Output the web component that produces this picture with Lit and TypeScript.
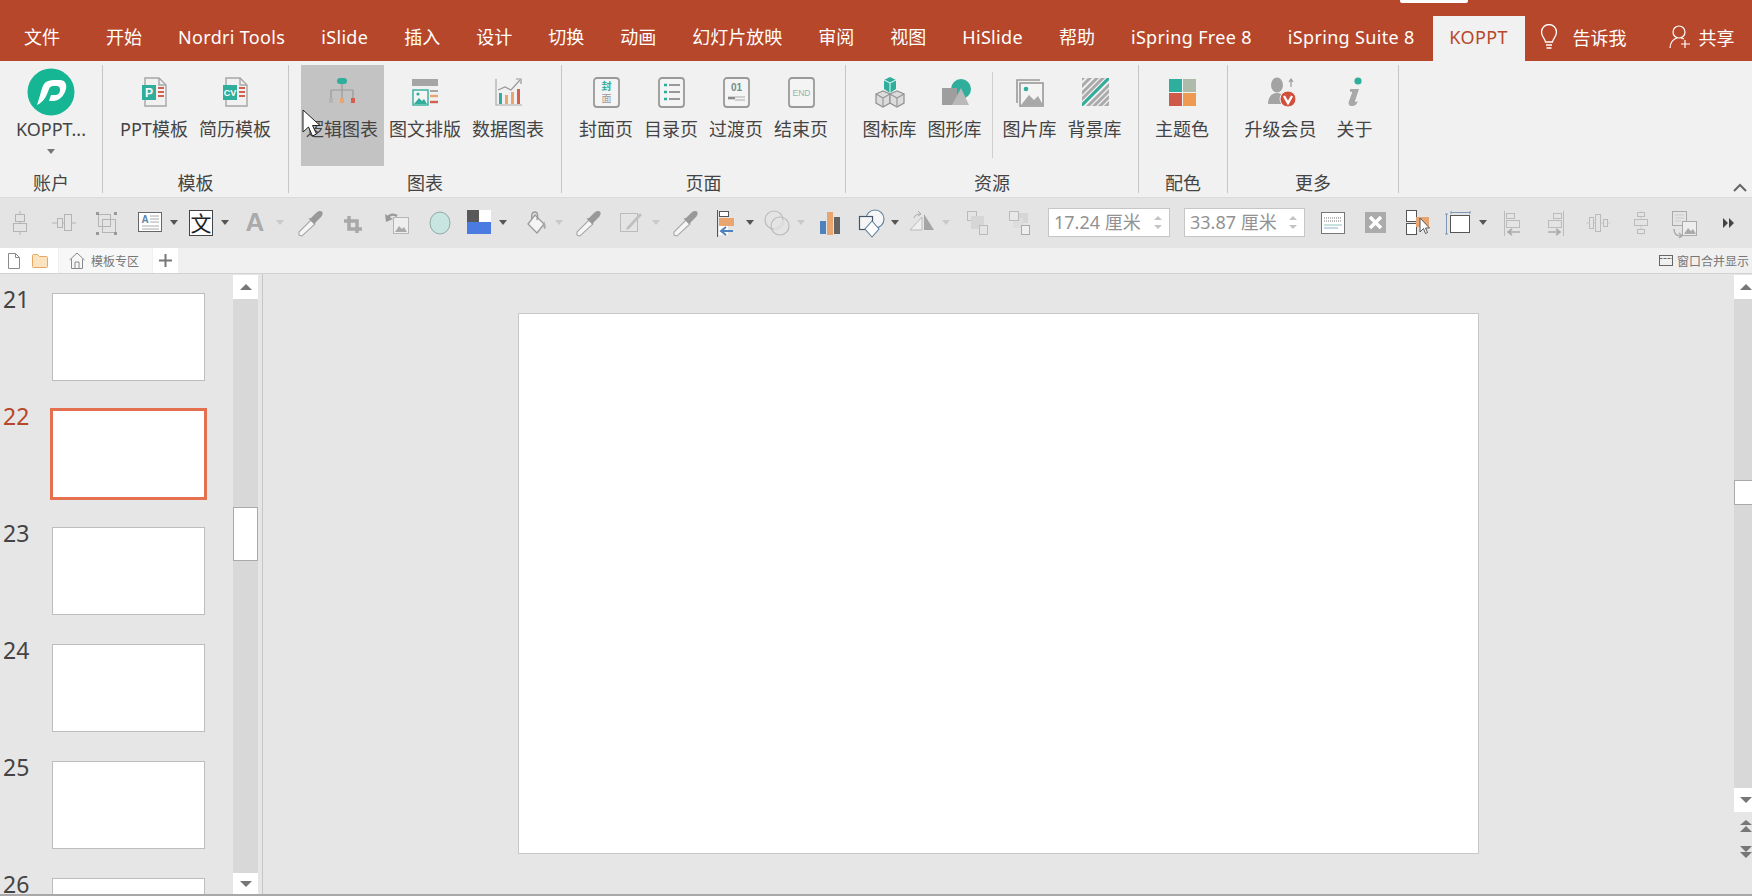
import { LitElement, html, css, svg } from "lit";
import { customElement } from "lit/decorators.js";
import { classMap } from "lit/directives/class-map.js";
import { styleMap } from "lit/directives/style-map.js";

const TEAL = "#2FAE9B";
const ORANGE = "#E9A56F";
const RED = "#D4604C";
const GRAY = "#A6A6A6";

// ribbon icons, drawn on a 32x32 box
const doc = (inner: unknown) => svg`
  <path d="M7 2h14l7 7v21H7z" fill="#f1f1f1" stroke="${GRAY}" stroke-width="1.4"/>
  <path d="M21 2v7h7" fill="none" stroke="${GRAY}" stroke-width="1.4"/>
  <rect x="4" y="9" width="14" height="15" fill="${TEAL}"/>
  <path d="M20 12h6M20 16h6M20 20h6" stroke="${RED}" stroke-width="2"/>
  ${inner}`;

const framed = (inner: unknown) => svg`
  <rect x="4" y="2" width="25" height="29" rx="3" fill="#f4f4f4" stroke="#9a9a9a" stroke-width="1.8"/>
  ${inner}`;

const cube = (x: number, y: number) => svg`
  <path d="M${x} ${y + 3}l7-3 7 3v9l-7 4-7-4z" fill="#dcdcdc" stroke="#959595" stroke-width="1.300"/>
  <path d="M${x} ${y + 3}l7 4 7-4M${x + 7} ${y + 7}v9" fill="none" stroke="#959595" stroke-width="1.100"/>`;

const RIBBON_ICONS: Record<string, unknown> = {
  ppt: doc(svg`<text x="11" y="21" text-anchor="middle" font-size="12" font-weight="700" fill="#fff" font-family="Liberation Sans">P</text>`),
  cv: doc(svg`<text x="11" y="20" text-anchor="middle" font-size="9" font-weight="700" fill="#fff" font-family="Liberation Sans">CV</text>`),
  logic: svg`
    <rect x="11" y="2" width="10" height="6" rx="3" fill="${TEAL}"/>
    <path d="M16 8v14M5 14h22M5 14v8M27 14v8" stroke="#999" stroke-width="1.2" fill="none"/>
    <rect x="3" y="22" width="4" height="5" fill="#b5b5b5"/>
    <rect x="14" y="22" width="4" height="5" fill="${ORANGE}"/>
    <rect x="25" y="22" width="4" height="5" fill="${RED}"/>`,
  layout: svg`
    <rect x="3" y="3" width="26" height="7" fill="#a5a5a5"/>
    <rect x="4" y="14" width="15" height="15" fill="#f4f4f4" stroke="${TEAL}" stroke-width="1.4"/>
    <path d="M5 28l5-6 3 3 2-2 3 5z" fill="${TEAL}"/>
    <circle cx="9" cy="18" r="1.6" fill="${TEAL}"/>
    <path d="M21 15h8" stroke="#a5a5a5" stroke-width="2"/>
    <path d="M21 20h8" stroke="${ORANGE}" stroke-width="2.4"/>
    <path d="M21 26h8" stroke="${RED}" stroke-width="2.4"/>`,
  chart: svg`
    <path d="M4 3v26h26" fill="none" stroke="#aaa" stroke-width="1.2"/>
    <rect x="7" y="17" width="3" height="11" fill="${TEAL}"/>
    <rect x="13" y="19" width="3" height="9" fill="${ORANGE}"/>
    <rect x="19" y="16" width="3" height="12" fill="${ORANGE}"/>
    <rect x="25" y="13" width="3" height="15" fill="${RED}"/>
    <path d="M6 14l7-3 6 3 9-10" fill="none" stroke="#999" stroke-width="1.2"/>
    <path d="M24 3h5v5" fill="none" stroke="#999" stroke-width="1.2"/>`,
  cover: framed(svg`
    <text x="16.500" y="14" text-anchor="middle" font-size="10" font-weight="700" fill="${TEAL}" font-family="Noto Sans CJK SC">封</text>
    <text x="16.500" y="26" text-anchor="middle" font-size="10" fill="#999" font-family="Noto Sans CJK SC">面</text>`),
  toc: framed(svg`
    <path d="M9 9h3M9 16h3M9 23h3" stroke="${TEAL}" stroke-width="2.600"/>
    <path d="M14 9h11M14 16h11M14 23h11" stroke="#999" stroke-width="2.200"/>`),
  trans: framed(svg`
    <text x="16.500" y="15" text-anchor="middle" font-size="10" font-weight="700" fill="#6f8f8b" font-family="Liberation Sans">01</text>
    <path d="M8 22h7" stroke="#8a8a8a" stroke-width="2.600"/>
    <path d="M15 21h10M15 24h10" stroke="#aaa" stroke-width="1"/>`),
  end: framed(svg`
    <text x="16.500" y="20" text-anchor="middle" font-size="8.500" fill="#8fb5b0" font-family="Liberation Sans">END</text>`),
  cubes: svg`
    ${cube(2, 15)}
    ${cube(16, 15)}
    <path d="M10 4l6-3 6 3v9l-6 4-6-4z" fill="${TEAL}"/>
    <path d="M10 4l6 3 6-3M16 7v10" fill="none" stroke="#d9f0ec" stroke-width="1.100"/>`,
  shapes: svg`
    <circle cx="22" cy="13" r="10" fill="${TEAL}"/>
    <rect x="3" y="12" width="15" height="17" fill="#9e9e9e"/>
    <path d="M13 29l9-17 8 17z" fill="#b9b9b9"/>`,
  pics: svg`
    <path d="M3 27V4h23" fill="none" stroke="#999" stroke-width="1.600"/>
    <rect x="6" y="7" width="23" height="23" fill="#f4f4f4" stroke="#999" stroke-width="1.600"/>
    <circle cx="12" cy="13" r="2.300" fill="${TEAL}"/>
    <path d="M7 29l8-10 5 5 4-4 5 9z" fill="#a8a8a8"/>`,
  stripes: svg`
    <defs><clipPath id="bg-clip"><rect x="3" y="2" width="27" height="28"/></clipPath></defs>
    <g clip-path="url(#bg-clip)" stroke-width="3" fill="none">
      <path d="M-4 10L10-4M-4 17L17-4M-4 24L24-4M-2 28L28-2M4 28L34-2" stroke="#aaa"/>
      <path d="M-1 33L35-3" stroke="${TEAL}"/>
      <path d="M6 33L38 1M12 33L40 5M18 33L42 9M24 33L44 13" stroke="#aaa"/>
    </g>`,
  theme: svg`
    <rect x="3" y="3" width="13" height="13" fill="#2EAE9C"/>
    <rect x="17" y="3" width="13" height="13" fill="#AEBBAA"/>
    <rect x="3" y="17" width="13" height="13" fill="#CF5A4A"/>
    <rect x="17" y="17" width="13" height="13" fill="#EE9A52"/>`,
  vip: svg`
    <ellipse cx="12" cy="9" rx="6" ry="7.500" fill="#a3a3a3"/>
    <path d="M3 28c0-6 3-11 9-11s9 5 9 11z" fill="#a3a3a3"/>
    <path d="M26 4v7M24 6l2-3 2 3" fill="none" stroke="#999" stroke-width="1.200"/>
    <circle cx="23" cy="23" r="8" fill="#D24F3C" stroke="#f1f1f1" stroke-width="1"/>
    <path d="M19 20l4 7 4-7" fill="none" stroke="#fff" stroke-width="2.400"/>`,
  about: svg`
    <circle cx="19" cy="5" r="3.600" fill="${TEAL}"/>
    <path d="M11 13h9l-4 12c-.3 1 .6 1.500 3 0-1 3-3 5-6 5-3 0-4-2-3-5l3-8c.300-1-.3-1.500-2-1z" fill="#a8a8a8"/>`,
};

const dropperIcon = svg`
  <path d="M6 28l-3-1 0-3L15 12l4 4z" fill="#f6f6f6" stroke="#a8a8a8" stroke-width="1.100"/>
  <path d="M15 10l5-5c2-2.500 5-2.500 6-1.500s1 4-1.500 6l-5 5-1 2-6-6z" fill="#999"/>`;

const SB = "#b4b4b4";
const TOOL_ICONS: Record<string, unknown> = {
  alignV: svg`<path d="M15 3v24" stroke="${SB}"/><rect x="10.500" y="6.500" width="9" height="7" fill="#e4e4e4" stroke="${SB}"/><rect x="8.500" y="15.500" width="13" height="8" fill="#e4e4e4" stroke="${SB}"/>`,
  alignH: svg`<path d="M3 15h24" stroke="${SB}"/><rect x="8.500" y="10.500" width="5" height="9" fill="#e4e4e4" stroke="${SB}"/><rect x="15.500" y="6.500" width="7" height="16" fill="#e4e4e4" stroke="${SB}"/>`,
  group: svg`<rect x="7.500" y="6.500" width="12" height="12" fill="none" stroke="${SB}"/><rect x="11.500" y="11.500" width="13" height="13" fill="none" stroke="${SB}"/><path d="M5 4h3v3H5zM23 4h3v3h-3zM5 24h3v3H5zM23 24h3v3h-3z" fill="#999"/>`,
  textbox: svg`<rect x="3.500" y="4.500" width="23" height="19" fill="#fff" stroke="#666"/><text x="10" y="15" text-anchor="middle" font-size="10" font-weight="700" fill="#5b84a8" font-family="Liberation Sans">A</text><path d="M15 8h9M15 11h9M15 14h9M7 18h17M7 21h17" stroke="#aaa"/>`,
  wen: svg`<rect x="3.500" y="2.500" width="23" height="25" fill="#fff" stroke="#444"/><text x="15" y="23" text-anchor="middle" font-size="21" fill="#222" font-family="Noto Sans CJK SC">文</text>`,
  letterA: svg`<text x="15" y="23" text-anchor="middle" font-size="26" font-weight="700" fill="#aaa" font-family="Liberation Sans">A</text>`,
  dropper: dropperIcon,
  crop: svg`<path d="M11 8v13h13M6 13h13v12" fill="none" stroke="#a8a8a8" stroke-width="3.500"/>`,
  undoPic: svg`<rect x="11.500" y="9.500" width="15" height="16" fill="#eee" stroke="#b5b5b5"/><path d="M13 24l4-6 3 3 2-2 3 5z" fill="#aaa"/><path d="M5 10c3-4 7-4 10-2" fill="none" stroke="#999" stroke-width="2.400"/><path d="M3 6l1 8 7-3z" fill="#999"/>`,
  circle: svg`<ellipse cx="15" cy="15" rx="10" ry="11" fill="#c8e5e2" stroke="#8fa8a6"/>`,
  colors: svg`<rect x="3" y="2" width="12" height="12" fill="#595959"/><rect x="15" y="2" width="12" height="12" fill="#fff"/><rect x="3" y="14" width="24" height="12" fill="#4A7BE0"/>`,
  bucket: svg`<path d="M15 7l9 9-7 9-9-9z" fill="#f4f4f4" stroke="#999" stroke-width="1.300"/><path d="M12 11c-1-4 0-7 3-7s3 4 2 8" fill="none" stroke="#999" stroke-width="1.400"/><path d="M24 13c1 3 3 6 1 8-2 0-2-4-1-8z" fill="#aaa"/>`,
  edit: svg`<rect x="4.500" y="5.500" width="17" height="18" fill="none" stroke="#bbb"/><path d="M11 19l-1 3 3-1 13-14-2-2z" fill="#c0c0c0"/>`,
  barAlign: svg`<path d="M6.500 2v27" stroke="#555"/><rect x="8.500" y="3.500" width="9" height="5" fill="#fff" stroke="#555"/><rect x="8" y="10" width="15" height="8" fill="${ORANGE}"/><rect x="8" y="18" width="9" height="9" fill="#fff"/><path d="M22 23H11M15 19l-5 4 5 4" fill="none" stroke="#4F81BD" stroke-width="2"/>`,
  circles: svg`<circle cx="12" cy="12" r="9" fill="none" stroke="#bbb" stroke-width="1.200"/><circle cx="18" cy="18" r="9" fill="none" stroke="#bbb" stroke-width="1.200"/><path d="M12 21c5 1 10-4 9-9" fill="none" stroke="#ddd" stroke-width="3"/>`,
  bars: svg`<rect x="4" y="13" width="6" height="13" fill="#4F81BD"/><rect x="11" y="4" width="6" height="23" fill="${ORANGE}"/><rect x="18" y="9" width="6" height="17" fill="#636363"/>`,
  mixShapes: svg`<circle cx="19" cy="11" r="9" fill="#f6f6f6" stroke="#5d7f9c" stroke-width="1.100"/><rect x="3.500" y="8.500" width="13" height="13" fill="#f6f6f6" stroke="#44566a" stroke-width="1.200"/><path d="M16 13l7 8-7 8-7-8z" fill="#fff" stroke="#5d7f9c" stroke-width="1.100"/>`,
  flip: svg`<path d="M17 6l10 16H17z" fill="#a5a5a5"/><path d="M15 9L3 22h12z" fill="#eee" stroke="#bbb"/><path d="M7 10c1-3 3-4 6-4M11 3l3 3-3 2" fill="none" stroke="#aaa"/>`,
  sendBack: svg`<rect x="5.500" y="3.500" width="9" height="9" fill="none" stroke="#bbb"/><rect x="9" y="8" width="13" height="13" fill="#d6d6d6"/><rect x="17.500" y="17.500" width="8" height="9" fill="#e4e4e4" stroke="#bbb"/>`,
  bringFront: svg`<rect x="14" y="5" width="10" height="10" fill="#d6d6d6"/><rect x="9" y="10" width="10" height="10" fill="#ddd"/><rect x="5.500" y="3.500" width="9" height="9" fill="#e8e8e8" stroke="#bbb"/><rect x="17.500" y="17.500" width="8" height="9" fill="#eee" stroke="#aaa"/>`,
  textLines: svg`<rect x="3.500" y="4.500" width="23" height="21" fill="#fff" stroke="#777"/><path d="M6 10h18" stroke="#777" stroke-dasharray="1 1"/><path d="M6 13h18" stroke="#777" stroke-dasharray="1 1"/><path d="M6 17h18" stroke="#8fc4bc"/><path d="M6 20h14" stroke="#8fb0d0"/>`,
  closeBox: svg`<rect x="5" y="4" width="21" height="21" fill="#ababab"/><path d="M10 9l11 11M21 9L10 20" stroke="#fff" stroke-width="3.400"/>`,
  arrange: svg`<rect x="3.500" y="2.500" width="10" height="11" fill="#fff" stroke="#555"/><rect x="3.500" y="15.500" width="10" height="11" fill="#fff" stroke="#555"/><rect x="13" y="9" width="13" height="10" fill="${ORANGE}"/><path d="M17 10v14l3.500-3.500 2 5 2-1-2-4.500h4z" fill="#fff" stroke="#555"/>`,
  frame: svg`<rect x="7.500" y="7.500" width="19" height="17" fill="#fff" stroke="#555"/><path d="M3.500 6v20M2 6h3M2 26h3M8 4.500h19M8 3v3M27 3v3" fill="none" stroke="#7c97b3"/>`,
  alignL: svg`<path d="M6.500 3v25" stroke="#bbb"/><rect x="8.500" y="5.500" width="8" height="5" fill="none" stroke="#bbb"/><rect x="8.500" y="12.500" width="13" height="7" fill="none" stroke="#bbb"/><path d="M22 24H10M14 21l-4 3 4 3" fill="none" stroke="#aaa" stroke-width="1.600"/>`,
  alignR: svg`<path d="M23.500 3v25" stroke="#bbb"/><rect x="13.500" y="5.500" width="8" height="5" fill="none" stroke="#bbb"/><rect x="8.500" y="12.500" width="13" height="7" fill="none" stroke="#bbb"/><path d="M8 24h12M16 21l4 3-4 3" fill="none" stroke="#aaa" stroke-width="1.600"/>`,
  distH: svg`<path d="M3 15h24" stroke="#ccc"/><rect x="6.500" y="9.500" width="4" height="11" fill="#e4e4e4" stroke="#bbb"/><rect x="12.500" y="6.500" width="5" height="17" fill="#e4e4e4" stroke="#bbb"/><rect x="20.500" y="11.500" width="4" height="7" fill="#e4e4e4" stroke="#bbb"/>`,
  distV: svg`<path d="M15 3v24" stroke="#ccc"/><rect x="11.500" y="4.500" width="7" height="4" fill="#e4e4e4" stroke="#bbb"/><rect x="8.500" y="11.500" width="13" height="6" fill="#e4e4e4" stroke="#bbb"/><rect x="11.500" y="21.500" width="7" height="4" fill="#e4e4e4" stroke="#bbb"/>`,
  swapPic: svg`<rect x="3.500" y="3.500" width="14" height="14" fill="none" stroke="#aaa"/><path d="M6 7h9M6 10h9M6 13h6" stroke="#ccc"/><rect x="13.500" y="13.500" width="14" height="14" fill="#eee" stroke="#aaa"/><path d="M15 26l4-6 3 3 2-2 3 5z" fill="#aaa"/><path d="M5 21c0 5 3 7 7 7M10 25l3 3-3 2" fill="none" stroke="#aaa" stroke-width="1.400"/>`,
  more: svg`<path d="M11 10l5 5-5 5zM17 10l5 5-5 5z" fill="#444"/>`,
};

type Tool = { icon: string; c: number } | { caret: "dark" | "soft"; c: number } | { spin: string; from: number; to: number };

const TOOLS: Tool[] = [
  { icon: "alignV", c: 20 }, { icon: "alignH", c: 64 }, { icon: "group", c: 106 },
  { icon: "textbox", c: 150 }, { caret: "dark", c: 174 },
  { icon: "wen", c: 201 }, { caret: "dark", c: 225 },
  { icon: "letterA", c: 255 }, { caret: "soft", c: 280 },
  { icon: "dropper", c: 311 }, { icon: "crop", c: 353 }, { icon: "undoPic", c: 397 }, { icon: "circle", c: 440 },
  { icon: "colors", c: 479 }, { caret: "dark", c: 503 },
  { icon: "bucket", c: 535 }, { caret: "soft", c: 559 },
  { icon: "dropper", c: 589 },
  { icon: "edit", c: 631 }, { caret: "soft", c: 656 },
  { icon: "dropper", c: 686 },
  { icon: "barAlign", c: 726 }, { caret: "dark", c: 750 },
  { icon: "circles", c: 777 }, { caret: "soft", c: 801 },
  { icon: "bars", c: 831 },
  { icon: "mixShapes", c: 871 }, { caret: "dark", c: 895 },
  { icon: "flip", c: 922 }, { caret: "soft", c: 946 },
  { icon: "sendBack", c: 977 }, { icon: "bringFront", c: 1019 },
  { spin: "17.24 厘米", from: 1048, to: 1170 }, { spin: "33.87 厘米", from: 1184, to: 1305 },
  { icon: "textLines", c: 1333 }, { icon: "closeBox", c: 1375 }, { icon: "arrange", c: 1418 },
  { icon: "frame", c: 1458 }, { caret: "dark", c: 1483 },
  { icon: "alignL", c: 1513 }, { icon: "alignR", c: 1555 }, { icon: "distH", c: 1598 }, { icon: "distV", c: 1641 }, { icon: "swapPic", c: 1684 }, { icon: "more", c: 1727 },
];

const GROUPS = [
  { label: "账户", w: 103, pad: 0, buttons: [{ key: "logo", text: "KOPPT...", w: 84 }] },
  { label: "模板", w: 186, pad: 2, buttons: [{ key: "ppt", text: "PPT模板", w: 81 }, { key: "cv", text: "简历模板", w: 81 }] },
  { label: "图表", w: 273, pad: 0, buttons: [{ key: "logic", text: "逻辑图表", w: 83, active: true }, { key: "layout", text: "图文排版", w: 83 }, { key: "chart", text: "数据图表", w: 83 }] },
  { label: "页面", w: 284, pad: 0, buttons: [{ key: "cover", text: "封面页", w: 65 }, { key: "toc", text: "目录页", w: 65 }, { key: "trans", text: "过渡页", w: 65 }, { key: "end", text: "结束页", w: 65 }] },
  { label: "资源", w: 293, pad: 0, buttons: [{ key: "cubes", text: "图标库", w: 65 }, { key: "shapes", text: "图形库", w: 65 }, { key: "sep", text: "", w: 1 }, { key: "pics", text: "图片库", w: 65 }, { key: "stripes", text: "背景库", w: 65 }] },
  { label: "配色", w: 89, pad: 2, buttons: [{ key: "theme", text: "主题色", w: 65 }] },
  { label: "更多", w: 171, pad: 4, buttons: [{ key: "vip", text: "升级会员", w: 87 }, { key: "about", text: "关于", w: 61 }] },
];

const TABS = ["开始", "Nordri Tools", "iSlide", "插入", "设计", "切换", "动画", "幻灯片放映", "审阅", "视图", "HiSlide", "帮助", "iSpring Free 8", "iSpring Suite 8"];
const SLIDES = [21, 22, 23, 24, 25, 26];

@customElement("app-root")
export class AppRoot extends LitElement {
  static styles = css`
    :host {
      display: block;
      position: relative;
      width: 1752px;
      height: 896px;
      overflow: hidden;
      background: #e6e6e6;
      font-family: "Noto Sans", "Noto Sans CJK SC", sans-serif;
      color: #444;
    }

    .tabs {
      display: flex;
      align-items: flex-end;
      height: 61px;
      padding-left: 6px;
      background: #b7472a;
      color: #fff;
      font-size: 18px;
    }
    .tab {
      height: 45px;
      line-height: 42px;
      padding: 0 18px;
      white-space: nowrap;
    }
    .tab.latin { letter-spacing: 0.33px; }
    .tab.file { padding-right: 28px; }
    .tab.current {
      width: 92px;
      box-sizing: border-box;
      padding: 0;
      text-align: center;
      background: #f1f1f1;
      color: #b7472a;
      letter-spacing: 0.37px;
    }
    .title-mark {
      position: absolute;
      left: 1400px;
      top: 0;
      width: 68px;
      height: 3px;
      background: #fff;
      border-radius: 0 0 2px 2px;
    }
    .tell {
      display: flex;
      align-items: center;
      height: 45px;
      padding-bottom: 3px;
      box-sizing: border-box;
      white-space: nowrap;
    }
    .tell.search { margin-left: 15px; gap: 15px; }
    .tell.share { margin-left: 42px; gap: 8px; }

    .ribbon {
      display: flex;
      height: 137px;
      box-sizing: border-box;
      padding-top: 4px;
      background: #f1f1f1;
      border-bottom: 1px solid #dadada;
    }
    .group {
      display: flex;
      flex-direction: column;
      justify-content: space-between;
      box-sizing: border-box;
      height: 128px;
      border-right: 1px solid #c6c6c6;
    }
    .group-buttons {
      display: flex;
      justify-content: center;
      align-items: flex-start;
    }
    .group-label {
      height: 20px;
      line-height: 21px;
      text-align: center;
      font-size: 18px;
      color: #444;
    }
    .btn {
      display: flex;
      flex-direction: column;
      align-items: center;
      height: 101px;
      padding-top: 7px;
      box-sizing: border-box;
      font-size: 18px;
      color: #444;
      white-space: nowrap;
    }
    .btn.active { background: #c3c3c3; }
    .btn-icon {
      display: flex;
      align-items: center;
      justify-content: center;
      height: 40px;
    }
    .btn-label {
      height: 24px;
      line-height: 24px;
      margin-top: 5px;
    }
    .btn-caret {
      width: 0;
      height: 0;
      margin-top: 8px;
      border: 4px solid transparent;
      border-top: 5px solid #777;
      border-bottom: 0;
    }
    .inner-sep {
      flex: none;
      width: 1px;
      height: 86px;
      margin: 7px 4px 0 5px;
      background: #cfcfcf;
    }
    .collapse {
      margin-left: auto;
      margin-right: 5px;
      align-self: flex-end;
      margin-bottom: 5px;
    }
    .pointer {
      position: absolute;
      left: 302px;
      top: 109px;
    }

    .toolbar {
      display: flex;
      align-items: center;
      height: 50px;
      box-sizing: border-box;
      padding-bottom: 1px;
      background: #e4e4e4;
    }
    .tool { flex: none; width: 30px; height: 30px; overflow: visible; }
    .caret {
      flex: none;
      width: 0;
      height: 0;
      border: 4px solid transparent;
      border-top: 5px solid #555;
      border-bottom: 0;
    }
    .caret.soft { border-top-color: #c9c9c9; }
    .spin {
      flex: none;
      display: flex;
      align-items: center;
      justify-content: space-between;
      box-sizing: border-box;
      height: 29px;
      padding: 0 7px 0 5px;
      background: #fff;
      border: 1px solid #c6c6c6;
      font-size: 18px;
      color: #929292;
      white-space: nowrap;
    }
    .spin-text { line-height: 22px; margin-top: -2px; }
    .spin-arrows { display: flex; flex-direction: column; gap: 5px; }
    .spin-arrows i {
      display: block;
      width: 0;
      height: 0;
      border: 4px solid transparent;
    }
    .spin-arrows i:first-child { border-bottom: 4px solid #c4c4c4; border-top: 0; }
    .spin-arrows i:last-child { border-top: 4px solid #c4c4c4; border-bottom: 0; }

    .docbar {
      display: flex;
      align-items: stretch;
      height: 26px;
      box-sizing: border-box;
      background: #f0f0f0;
      border-bottom: 1px solid #d2d2d2;
      font-size: 12px;
      color: #777;
    }
    .doc-files {
      display: flex;
      align-items: center;
      gap: 11px;
      width: 58px;
      box-sizing: border-box;
      padding-left: 7px;
      background: #fff;
    }
    .doc-tab {
      display: flex;
      align-items: center;
      gap: 6px;
      width: 93px;
      box-sizing: border-box;
      margin-left: 1px;
      padding-left: 10px;
      background: #f7f7f7;
    }
    .doc-add {
      width: 25px;
      margin-left: 1px;
      background: #fff;
      display: flex;
      align-items: center;
      justify-content: center;
    }
    .doc-merge {
      display: flex;
      align-items: center;
      gap: 4px;
      margin-left: auto;
      padding-right: 3px;
      white-space: nowrap;
    }

    .main {
      display: flex;
      height: 622px;
      box-sizing: border-box;
      border-bottom: 2px solid #a8a8a8;
    }
    .pane {
      flex: none;
      display: flex;
      width: 263px;
      box-sizing: border-box;
      border-right: 1px solid #c6c6c6;
      padding-right: 4px;
    }
    .slides {
      flex: 1;
      overflow: hidden;
      padding-top: 19px;
    }
    .row {
      display: flex;
      height: 117px;
    }
    .num {
      width: 52px;
      box-sizing: border-box;
      padding-left: 3px;
      height: 20px;
      margin-top: -4px;
      line-height: 20px;
      font-size: 23px;
      color: #444;
    }
    .row.selected .num { color: #b7472a; }
    .thumb {
      width: 153px;
      height: 88px;
      box-sizing: border-box;
      background: #fff;
      border: 1px solid #bdbdbd;
    }
    .row.selected .thumb {
      outline: 3px solid #e4704f;
      outline-offset: -1px;
      border-color: #e4704f;
    }
    .bar {
      flex: none;
      display: flex;
      flex-direction: column;
      width: 25px;
      margin-top: 1px;
    }
    .bar-btn {
      flex: none;
      display: flex;
      align-items: center;
      justify-content: center;
      height: 24px;
      background: #fff;
    }
    .bar-down { height: 21px; margin-top: auto; }
    .track { flex: 1; display: flex; flex-direction: column; background: #d8d8d8; }
    .thumb-spacer { height: 208px; }
    .bar-thumb {
      height: 54px;
      box-sizing: border-box;
      background: #fff;
      border: 1px solid #aaa;
    }
    .up { width: 0; height: 0; border: 6px solid transparent; border-bottom: 6px solid #777; border-top: 0; }
    .down { width: 0; height: 0; border: 6px solid transparent; border-top: 6px solid #777; border-bottom: 0; }

    .canvas {
      flex: 1;
      display: flex;
      align-items: center;
      justify-content: center;
      padding-bottom: 2px;
    }
    .slide {
      width: 961px;
      height: 541px;
      box-sizing: border-box;
      background: #fff;
      border: 1px solid #c8c8c8;
    }
    .vbar {
      flex: none;
      display: flex;
      flex-direction: column;
      width: 24px;
      margin-right: -6px;
      margin-top: 1px;
    }
    .vtrack { height: 489px; background: #d8d8d8; }
    .vspacer { height: 181px; }
    .vthumb {
      height: 25px;
      box-sizing: border-box;
      background: #fff;
      border: 1px solid #aaa;
      border-right: 0;
    }
    .jump {
      display: flex;
      flex-direction: column;
      align-items: center;
      gap: 14px;
      margin-top: 8px;
    }
    .jump svg { display: block; }
  `;

  private renderRibbonIcon(key: string) {
    if (key === "logo") {
      return svg`<svg width="48" height="48" viewBox="0 0 48 48">
        <circle cx="24" cy="24" r="23.500" fill="#16B694"/>
        <path d="M10 37C13 29 14 21 17 16c2-3 6-4 10-4h6c5 0 7 4 6 9-2 7-6 11-12 12h-5l2-6h4c3 0 5-2 5-5 0-3-1-4-4-4h-3c-2 0-3 1-4 3-2 6-5 13-12 16z" fill="#fff"/>
      </svg>`;
    }
    return svg`<svg width="32" height="32" viewBox="0 0 32 32">${RIBBON_ICONS[key]}</svg>`;
  }

  private renderTools() {
    let end = 0;
    return TOOLS.map((t) => {
      if ("spin" in t) {
        const ml = t.from - end;
        end = t.to;
        return html`<div class="spin" style=${styleMap({ marginLeft: `${ml}px`, width: `${t.to - t.from}px` })}>
          <span class="spin-text">${t.spin}</span>
          <span class="spin-arrows"><i></i><i></i></span>
        </div>`;
      }
      if ("caret" in t) {
        const ml = t.c - 4 - end;
        end = t.c + 4;
        return html`<span class="caret ${t.caret === "soft" ? "soft" : ""}" style=${styleMap({ marginLeft: `${ml}px` })}></span>`;
      }
      const ml = t.c - 15 - end;
      end = t.c + 15;
      return html`<svg class="tool" viewBox="0 0 30 30" style=${styleMap({ marginLeft: `${ml}px` })}>${TOOL_ICONS[t.icon]}</svg>`;
    });
  }

  render() {
    return html`
      <div class="title-mark"></div>
      <div class="tabs">
        <div class="tab file">文件</div>
        ${TABS.map((t) => html`<div class=${classMap({ tab: true, latin: /[a-z]/i.test(t) })}>${t}</div>`)}
        <div class="tab current">KOPPT</div>
        <div class="tell search">
          <svg width="18" height="26" viewBox="0 0 18 26" fill="none" stroke="#fff" stroke-width="1.300">
            <path d="M5.500 18c0-3-4-5-4-10a7.500 7.500 0 0 1 15 0c0 5-4 7-4 10z"/>
            <path d="M6 21h6M6.500 24h5" stroke-width="1.600"/>
          </svg>
          <span>告诉我</span>
        </div>
        <div class="tell share">
          <svg width="22" height="24" viewBox="0 0 22 24" fill="none" stroke="#fff" stroke-width="1.200">
            <circle cx="10" cy="7" r="6"/>
            <path d="M1 23c0-5 3-9 7-10M12 13c1 0 2 .4 3 1M16 15v8M12 19h9"/>
          </svg>
          <span>共享</span>
        </div>
      </div>

      <div class="ribbon">
        ${GROUPS.map(
          (g) => html`<div class="group" style=${styleMap({ width: `${g.w}px` })}>
            <div class="group-buttons" style=${styleMap({ paddingRight: `${g.pad}px` })}>
              ${g.buttons.map((b) =>
                b.key === "sep"
                  ? html`<div class="inner-sep"></div>`
                  : html`<div class=${classMap({ btn: true, active: !!(b as { active?: boolean }).active })} style=${styleMap({ width: `${b.w}px` })}>
                      <div class="btn-icon">${this.renderRibbonIcon(b.key)}</div>
                      <div class="btn-label">${b.text}</div>
                      ${b.key === "logo" ? html`<div class="btn-caret"></div>` : ""}
                    </div>`,
              )}
            </div>
            <div class="group-label">${g.label}</div>
          </div>`,
        )}
        <svg class="collapse" width="14" height="9" viewBox="0 0 14 9" fill="none" stroke="#666" stroke-width="2"><path d="M1 8l6-6 6 6"/></svg>
      </div>
      <svg class="pointer" width="20" height="30" viewBox="0 0 20 30">
        <path d="M1 1v22l5.500-5 4 9 4-2-4-8.500h7.500z" fill="#fff" stroke="#222" stroke-width="1"/>
      </svg>

      <div class="toolbar">${this.renderTools()}</div>

      <div class="docbar">
        <div class="doc-files">
          <svg width="14" height="18" viewBox="0 0 14 18" fill="#fff" stroke="#8a8a8a"><path d="M1.500 1.500h7l4 4v11h-11zM8.500 1.500v4h4"/></svg>
          <svg width="16" height="15" viewBox="0 0 16 15" fill="#fbe3c0" stroke="#e6a860"><path d="M.5 2.500a1 1 0 0 1 1-1h4l2 2h7a1 1 0 0 1 1 1v9a1 1 0 0 1-1 1h-13a1 1 0 0 1-1-1z"/></svg>
        </div>
        <div class="doc-tab">
          <svg width="16" height="17" viewBox="0 0 16 17" fill="none" stroke="#8a8a8a"><path d="M.5 8L8 1l7.500 7M2.500 7v9.500h11V7M6 16.500V10h4v6.500"/></svg>
          <span>模板专区</span>
        </div>
        <div class="doc-add">
          <svg width="13" height="13" viewBox="0 0 13 13" stroke="#777" stroke-width="2"><path d="M6.500 0v13M0 6.500h13"/></svg>
        </div>
        <div class="doc-merge">
          <svg width="14" height="11" viewBox="0 0 14 11" fill="none" stroke="#666"><rect x=".5" y=".5" width="13" height="10"/><path d="M.5 3.500h13" stroke-dasharray="3 1"/></svg>
          <span>窗口合并显示</span>
        </div>
      </div>

      <div class="main">
        <div class="pane">
          <div class="slides">
            ${SLIDES.map(
              (n) => html`<div class=${classMap({ row: true, selected: n === 22 })}>
                <div class="num">${n}</div>
                <div class="thumb"></div>
              </div>`,
            )}
          </div>
          <div class="bar">
            <div class="bar-btn"><span class="up"></span></div>
            <div class="track"><div class="thumb-spacer"></div><div class="bar-thumb"></div></div>
            <div class="bar-btn bar-down"><span class="down"></span></div>
          </div>
        </div>
        <div class="canvas"><div class="slide"></div></div>
        <div class="vbar">
          <div class="bar-btn"><span class="up"></span></div>
          <div class="vtrack"><div class="vspacer"></div><div class="vthumb"></div></div>
          <div class="bar-btn"><span class="down"></span></div>
          <div class="jump">
            <svg width="12" height="12" viewBox="0 0 12 12" fill="#777"><path d="M6 0l6 5H0zM6 6l6 6H0z"/></svg>
            <svg width="12" height="12" viewBox="0 0 12 12" fill="#777"><path d="M0 0h12L6 6zM0 6h12l-6 6z"/></svg>
          </div>
        </div>
      </div>
    `;
  }
}
